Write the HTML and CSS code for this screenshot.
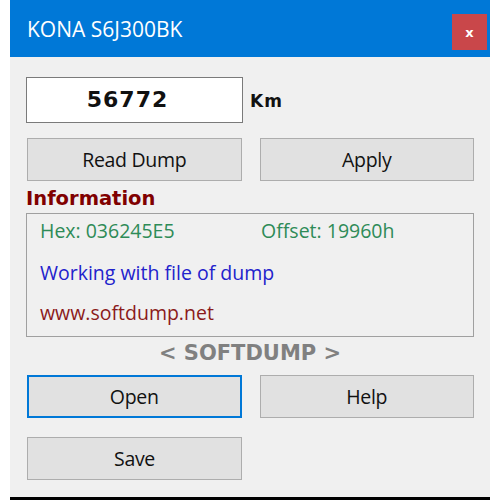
FILE: index.html
```html
<html>
    <head>
        <link rel="stylesheet" href="styles.css">
    </head>
    <body>
        <div class="window">
            <div class="titlebar">
                <div class="title">KONA S6J300BK</div>
                <button class="close">x</button>
            </div>
            <div class="content">
                <div class="row km-row">
                    <div class="km-box">56772</div>
                    <div class="km-label">Km</div>
                </div>
                <div class="row">
                    <button class="btn">Read Dump</button>
                    <button class="btn">Apply</button>
                </div>
                <div class="info-title">Information</div>
                <div class="info">
                    <div class="info-line green">
                        <span class="hex">Hex: 036245E5</span>
                        <span>Offset: 19960h</span>
                    </div>
                    <div class="info-line blue">Working with file of dump</div>
                    <div class="info-line red">www.softdump.net</div>
                </div>
                <div class="brand">&lt; SOFTDUMP &gt;</div>
                <div class="row">
                    <button class="btn focused">Open</button>
                    <button class="btn">Help</button>
                </div>
                <div class="row save-row">
                    <button class="btn">Save</button>
                </div>
            </div>
        </div>
    </body>
</html>
```

FILE: styles.css
```css
*{
  margin:0px;
  box-sizing:border-box;
}

body{
  background:#fff;
  font-family:"Open Sans", sans-serif;
}

.window{
  width:480px;
  height:500px;
  margin-left:10px;
  background:#f0f0f0;
  border-bottom:3px solid #000;
  display:flex;
  flex-direction:column;
}

.titlebar{
  height:57px;
  background:#0078d7;
  display:flex;
  justify-content:space-between;
  align-items:flex-start;
  padding:0px 3px 0px 17px;
}

.title{
  color:#fff;
  font-size:21px;
  line-height:58px;
}

.close{
  width:35px;
  height:36px;
  margin-top:14px;
  background:#c9474a;
  border:none;
  color:#fff;
  font-family:"DejaVu Sans", sans-serif;
  font-weight:bold;
  font-size:13px;
  padding:0px;
}

.content{
  padding:20px 16px 0px 16px;
  display:flex;
  flex-direction:column;
}

.row{
  display:flex;
  gap:18px;
  padding-left:1px;
}

.km-row{
  gap:7px;
  padding-left:0px;
  align-items:center;
  margin-bottom:15px;
}

.km-box{
  width:217px;
  height:46px;
  background:#fff;
  border:1px solid #7a7a7a;
  text-align:center;
  line-height:44px;
  padding-right:14px;
  font-family:"DejaVu Sans", sans-serif;
  font-weight:bold;
  font-size:22px;
  letter-spacing:1px;
  color:#111;
}

.km-label{
  font-family:"DejaVu Sans", sans-serif;
  font-weight:bold;
  font-size:17px;
  letter-spacing:1px;
  color:#111;
  margin-top:2px;
}

.btn{
  width:215px;
  height:43px;
  background:#e1e1e1;
  border:1px solid #adadad;
  font-family:"Open Sans", sans-serif;
  font-size:19.5px;
  letter-spacing:-0.3px;
  color:#111;
  padding:0px;
}

.btn.focused{
  border:2px solid #0078d7;
}

.info-title{
  font-family:"DejaVu Sans", sans-serif;
  font-weight:bold;
  font-size:19.5px;
  color:#800000;
  height:32px;
  line-height:36px;
}

.info{
  width:448px;
  height:124px;
  border:1px solid #a0a0a0;
  padding:0px 13px;
  font-size:19.5px;
}

.info-line{
  height:42px;
  line-height:34px;
}

.hex{
  display:inline-block;
  width:216px;
}

.green{
  color:#2e8b57;
}

.blue{
  color:#2222cc;
}

.red{
  color:#8b1a1a;
  line-height:30px;
}

.brand{
  text-align:center;
  font-family:"DejaVu Sans", sans-serif;
  font-weight:bold;
  font-size:21px;
  color:#808080;
  height:38px;
  line-height:32px;
}

.save-row{
  margin-top:19px;
}
```
